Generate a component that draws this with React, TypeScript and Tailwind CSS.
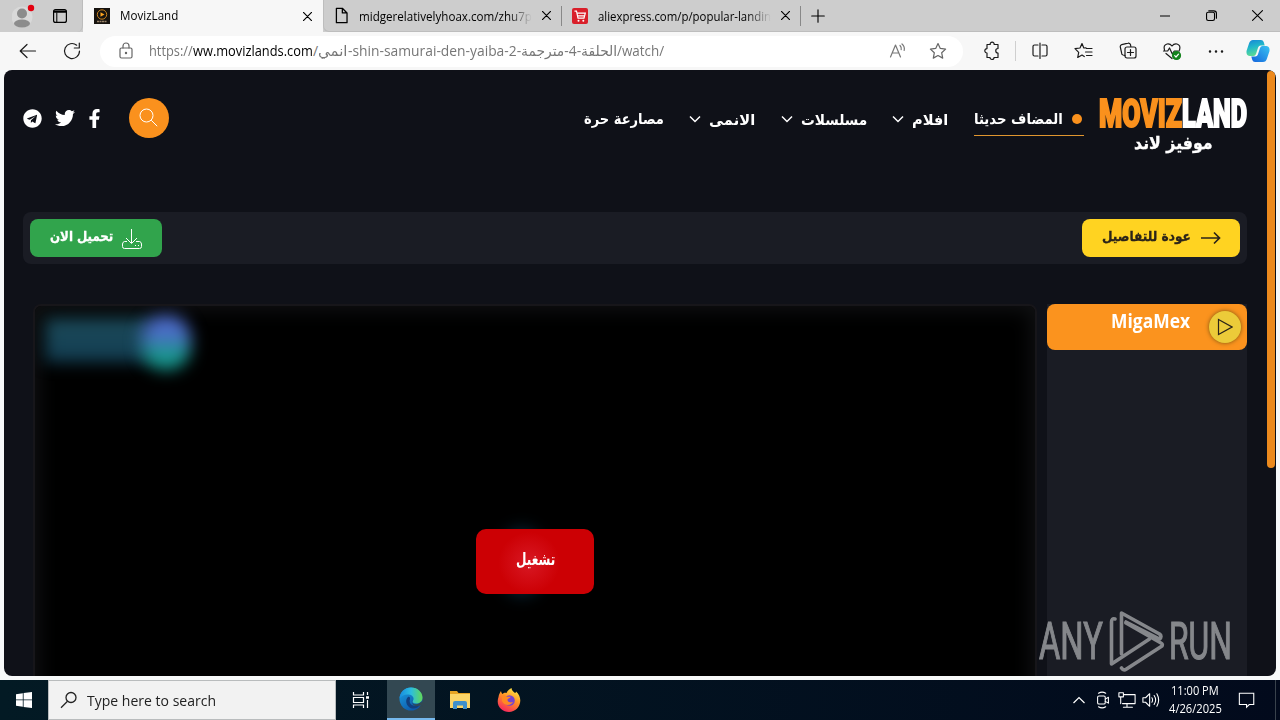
import { useLayoutEffect, useRef, useState } from "react";
import type { ReactNode } from "react";
import { clsx } from "clsx";
import { FaFacebookF, FaTelegram, FaTwitter } from "react-icons/fa";

const SEGOE = "font-['Open_Sans','Noto_Sans',sans-serif]";
const ARABIC = "font-['DejaVu_Sans',sans-serif] font-bold";

// Single line label squeezed or stretched to the width of its box
function Fit({
  className,
  rtl,
  children,
}: {
  className: string;
  rtl?: boolean;
  children: ReactNode;
}) {
  const box = useRef<HTMLSpanElement>(null);
  const text = useRef<HTMLSpanElement>(null);
  const [scale, setScale] = useState(1);

  useLayoutEffect(() => {
    if (box.current && text.current) {
      setScale(box.current.offsetWidth / text.current.offsetWidth);
    }
  }, []);

  return (
    <span ref={box} className={clsx("block shrink-0 whitespace-nowrap", className)}>
      <span
        ref={text}
        dir={rtl ? "rtl" : "ltr"}
        className="inline-block origin-left"
        style={{ transform: `scaleX(${scale})` }}
      >
        {children}
      </span>
    </span>
  );
}

function Icon({ className, children }: { className?: string; children: ReactNode }) {
  return (
    <svg
      viewBox="0 0 20 20"
      fill="none"
      stroke="currentColor"
      strokeWidth="1.2"
      strokeLinecap="round"
      strokeLinejoin="round"
      className={clsx("shrink-0", className ?? "size-5")}
    >
      {children}
    </svg>
  );
}

function CloseIcon() {
  return (
    <Icon className="size-[9px]">
      <path d="M1 1l18 18M19 1L1 19" strokeWidth="2.6" />
    </Icon>
  );
}

function TabBar() {
  return (
    <div className="flex h-8 bg-[#cdcdcd] text-[12px] leading-8 text-black">
      <div className="flex w-[83px] shrink-0 items-center rounded-br-md border-r border-[#bdbdbd] pl-3">
        <svg viewBox="0 0 24 28" className="h-7 w-6">
          <circle cx="10" cy="15" r="10.5" fill="#d9d9d9" />
          <circle cx="10" cy="11.5" r="5" fill="#8c8c8c" />
          <ellipse cx="10" cy="21.5" rx="8" ry="4" fill="#8c8c8c" />
          <circle cx="19" cy="6" r="3.2" fill="#e3000f" />
        </svg>
        <Icon className="ml-4 size-4">
          <rect x="2" y="2" width="16" height="16" rx="2.5" strokeWidth="1.5" />
          <path d="M3 4.500h14" strokeWidth="3" />
          <path d="M6 6v11.500" strokeWidth="1.3" />
        </Icon>
      </div>

      <div className="flex w-[240px] shrink-0 items-center bg-[#f7f7f7] pl-[11px]">
        <svg viewBox="0 0 16 16" className="size-4">
          <rect width="16" height="16" fill="#17130f" />
          <circle cx="8" cy="6.500" r="4.700" fill="none" stroke="#c98320" />
          <path d="M6.500 4.200v4.600l4-2.300z" fill="#ffa51f" />
          <path d="M3 13.500h10" stroke="#99836a" strokeWidth="1.400" strokeDasharray="2 .5" />
        </svg>
        <Fit className="ml-[10px] w-[58px]">MovizLand</Fit>
        <div className="ml-auto mr-[11px]">
          <CloseIcon />
        </div>
      </div>

      <div className="flex w-[239px] shrink-0 items-center rounded-bl-md border-b border-l border-[#bdbdbd] pl-[9px]">
        <Icon className="size-[17px]">
          <path d="M4 1.500h7l5.500 5.500v11.500H4zM11 1.500V7h5.500" strokeWidth="1.500" />
        </Icon>
        <div className="relative ml-[9px] h-[30px] w-[173px] leading-[31px]">
          <Fit className="w-[173px]">midgerelativelyhoax.com/zhu7p</Fit>
          <div className="absolute inset-y-0 right-0 w-6 bg-gradient-to-r from-[#cdcdcd]/0 to-[#cdcdcd]" />
        </div>
        <div className="ml-auto mr-[11px]">
          <CloseIcon />
        </div>
      </div>

      <div className="flex w-[239px] shrink-0 items-center border-b border-[#bdbdbd]">
        <div className="-ml-px h-5 w-px shrink-0 bg-[#888]" />
        <svg viewBox="0 0 16 16" className="ml-[10px] size-4">
          <rect width="16" height="16" rx="2" fill="#d91f2a" />
          <path
            d="M2.500 3.200h2l1.500 7h6l1.300-5H5M5.500 7.800h6.500"
            fill="none"
            stroke="#fff"
            strokeWidth="1.200"
          />
          <circle cx="6.500" cy="12.700" r="1" fill="#fff" />
          <circle cx="11.300" cy="12.700" r="1" fill="#fff" />
        </svg>
        <div className="relative ml-[10px] h-[30px] w-[173px] leading-[31px]">
          <Fit className="w-[173px]">aliexpress.com/p/popular-landin</Fit>
          <div className="absolute inset-y-0 right-0 w-6 bg-gradient-to-r from-[#cdcdcd]/0 to-[#cdcdcd]" />
        </div>
        <div className="ml-auto mr-[11px]">
          <CloseIcon />
        </div>
      </div>

      <div className="flex grow items-center border-b border-[#bdbdbd] pr-[17px]">
        <div className="-ml-px h-5 w-px bg-[#888]" />
        <Icon className="ml-[10px] size-[14px]">
          <path d="M10 1v18M1 10h18" strokeWidth="1.600" />
        </Icon>
        <Icon className="ml-auto size-[10px]">
          <path d="M0 10h20" strokeWidth="2" />
        </Icon>
        <Icon className="ml-[36px] size-[11px]">
          <rect x="1" y="4" width="14.500" height="15" rx="3" strokeWidth="2" />
          <path d="M5 1.500h9q5 0 5 5V15" strokeWidth="2" />
        </Icon>
        <Icon className="ml-[35px] size-[11px]">
          <path d="M1 1l18 18M19 1L1 19" strokeWidth="2" />
        </Icon>
      </div>
    </div>
  );
}

function AddressBar() {
  return (
    <div className="flex h-[38px] items-center bg-[#f7f7f7] pl-[18px] pr-[10px] text-[#1b1b1b]">
      <Icon>
        <path d="M17.500 10H2.500M9 3.500L2.200 10 9 16.500" />
      </Icon>
      <Icon className="ml-6 size-5">
        <path d="M17.500 10a7.500 7.500 0 1 1-2.800-5.800M17.300 2v5h-5" />
      </Icon>

      <div className="ml-[18px] flex h-[31px] w-[863px] items-center rounded-full bg-white pl-4 pr-[15px] text-[14px] leading-[30px] text-[#767676]">
        <Icon className="size-5 text-[#666]">
          <rect x="4" y="7" width="12" height="10" rx="1.500" />
          <path d="M7 7V5a3 3 0 0 1 6 0v2" />
          <circle cx="10" cy="12" r=".6" fill="currentColor" />
        </Icon>
        <Fit className="ml-[13px] w-[44px]">https://</Fit>
        <Fit className="w-[120px] text-black">ww.movizlands.com</Fit>
        <Fit className="w-[5px]">/</Fit>
        <Fit rtl className="w-[30px] font-['Open_Sans','DejaVu_Sans']">
          انمي
        </Fit>
        <Fit className="w-[173px]">-shin-samurai-den-yaiba-2-</Fit>
        <Fit rtl className="w-[96px] font-['Open_Sans','DejaVu_Sans']">
          الحلقة-4-مترجمة
        </Fit>
        <Fit className="w-[47px]">/watch/</Fit>
        <Icon className="ml-auto size-5 text-[#777]">
          <path d="M2.500 16L7.500 4l5 12M4.300 12h6.400M12 4.500q1.800 1.800 1.200 4.200M14 3q3 2.500 2.200 6.500" />
        </Icon>
        <Icon className="ml-5 size-5 text-[#666]">
          <path d="M10 2.500l2.300 4.900 5.300.7-3.900 3.700 1 5.300-4.700-2.600-4.700 2.600 1-5.300-3.900-3.700 5.300-.7z" />
        </Icon>
      </div>

      <Icon className="ml-[19px] size-5">
        <path d="M5 3.500h3.200a2 2 0 1 1 3.900 0H16v4a2 2 0 0 0 0 4.500v4.500h-4a2 2 0 0 1-4 0H5V12a2.200 2.200 0 1 1 0-4.400z" />
      </Icon>
      <div className="ml-[13px] h-5 w-px bg-[#cfcfcf]" />
      <Icon className="ml-[14px] size-5">
        <path d="M8 4H4.500A1.500 1.500 0 0 0 3 5.500v8A1.500 1.500 0 0 0 4.500 15H8M12 4h3.500A1.500 1.500 0 0 1 17 5.500v8a1.500 1.500 0 0 1-1.500 1.500H12M10 2v15.500" />
      </Icon>
      <Icon className="ml-6 size-5">
        <path d="M12 6.800L9.800 7 8 2.500 6 7l-5 .6 3.700 3.700-1 5.200L8 14l2.300 1.500M12.500 7.500H18M11.500 11H18M12.500 14.500H18" />
      </Icon>
      <Icon className="ml-6 size-5">
        <path d="M7 14.500l-2-.5a2 2 0 0 1-1.400-2.200L2.300 6a2 2 0 0 1 1.500-2.400L10 2.200a2 2 0 0 1 2.500 1.500l.3 1.800" />
        <rect x="7" y="6" width="11" height="11" rx="2" />
        <path d="M12.500 8.500v6M9.500 11.500h6" />
      </Icon>
      <Icon className="ml-6 size-5">
        <path d="M2.500 9Q1 4 5 3q3-.6 5 2 2-2.600 5-2 4 1 2.500 6M1.500 10h4.200l1.800-3 2.800 6 2-3h5M4 12.500l6 5" />
        <circle cx="14.500" cy="14.500" r="4" fill="#14831d" stroke="#14831d" />
        <path d="M12.700 14.700l1.300 1.300 2.500-2.800" stroke="#fff" />
      </Icon>
      <Icon className="ml-6 size-5">
        <path d="M4 10.500h.01M10 10.500h.01M16 10.500h.01" strokeWidth="2.500" />
      </Icon>
      <svg viewBox="0 0 24 24" className="ml-auto size-6">
        <defs>
          <linearGradient id="cpA" x1="0" y1="0" x2="0.3" y2="1">
            <stop offset="0" stopColor="#1683d8" />
            <stop offset="0.500" stopColor="#21b8c9" />
            <stop offset="1" stopColor="#5ddb93" />
          </linearGradient>
          <linearGradient id="cpB" x1="1" y1="0" x2="0" y2="1">
            <stop offset="0" stopColor="#38c4f2" />
            <stop offset="1" stopColor="#1463dc" />
          </linearGradient>
        </defs>
        <path
          d="M7 1h8q2 0 2.700 2l1 3.500h-4q-2 0-2.600 2L10 15q-.7 2-2.500 2H3.500Q0 16.500.5 12L3 4.500Q4 1 7 1z"
          fill="url(#cpA)"
        />
        <path
          d="M17 23H9q-2 0-2.700-2l-1-3.500h4q2 0 2.600-2L14 9q.7-2 2.500-2h4q3.500.5 3 5L21 19.500Q20 23 17 23z"
          fill="url(#cpB)"
        />
      </svg>
    </div>
  );
}

function Chevron({ className }: { className: string }) {
  return (
    <svg viewBox="0 0 12 8" className={clsx("-mt-px h-2 w-3 shrink-0", className)}>
      <path d="M1 1.500l5 5 5-5" fill="none" stroke="#fff" strokeWidth="1.500" />
    </svg>
  );
}

function SiteHeader() {
  return (
    <header className="flex h-[142px] items-start pl-[19px] pr-[29px] text-white">
      <div className="mt-[28px] flex h-10 items-center">
        <FaTelegram className="size-[19px]" />
        <FaTwitter className="ml-[13px] size-5" />
        <FaFacebookF className="ml-[10px] size-[19px]" />
        <div className="ml-[25px] flex size-10 items-center justify-center rounded-full bg-[#fa911d]">
          <svg viewBox="0 0 20 20" className="size-5" fill="none" stroke="#fff">
            <circle cx="7.500" cy="7.500" r="6.500" />
            <path d="M12.200 12.200l6 6" />
          </svg>
        </div>
      </div>

      <nav className={clsx("ml-auto mt-[33px] flex h-[33px] items-center text-[15px] leading-[32px]", ARABIC)}>
        <Fit rtl className="-mt-px w-[80px]">
          مصارعة حرة
        </Fit>
        <Chevron className="ml-[25px]" />
        <Fit rtl className="ml-2 w-[46px]">
          الانمى
        </Fit>
        <Chevron className="ml-[26px]" />
        <Fit rtl className="ml-2 w-[66px]">
          مسلسلات
        </Fit>
        <Chevron className="ml-[25px]" />
        <Fit rtl className="ml-2 w-[36px]">
          افلام
        </Fit>
        <div className="ml-[26px] w-[110px]">
          <div className="flex h-8 items-center">
            <Fit rtl className="w-[89px]">
              المضاف حديثا
            </Fit>
            <span className="ml-[9px] size-[10px] rounded-full bg-[#fa911d]" />
          </div>
          <div className="h-px bg-[#e0962f]" />
        </div>
      </nav>

      <div className="ml-[15px] mt-[26px] w-[148px]">
        <div className="flex h-9 font-['Roboto',sans-serif] text-[38px] font-black leading-9 [-webkit-text-stroke:2px_currentColor]">
          <Fit className="w-[83px] text-[#fa911d]">MOVIZ</Fit>
          <Fit className="w-[65px]">LAND</Fit>
        </div>
        <Fit rtl className={clsx("ml-[35px] h-6 w-[79px] text-[17px] leading-[22px] [-webkit-text-stroke:0.4px_currentColor]", ARABIC)}>
          موفيز لاند
        </Fit>
      </div>
    </header>
  );
}

function ActionBar() {
  return (
    <div className={clsx("ml-[19px] flex h-[52px] w-[1224px] items-center justify-between rounded-lg bg-[#1a1c24] px-[7px] text-[13.500px]", ARABIC)}>
      <button className="flex h-[38px] w-[132px] items-center rounded-lg bg-[#31a44c] pl-5 text-white [-webkit-text-stroke:0.3px_currentColor]">
        <Fit rtl className="-mt-[3px] w-[63px]">
          تحميل الان
        </Fit>
        <svg viewBox="0 0 20 20" className="ml-[9px] mt-px size-5" fill="none" stroke="#fff">
          <path d="M9.500 0v14M4 9l5.500 5.500L15 9" />
          <path d="M5 12.500H2.500Q.5 13 .5 15v2.500q0 2 2 2h15q2 0 2-2V15q0-2-2-2.500H14M13 16.500h1M16 16.500h1" />
        </svg>
      </button>
      <button className="flex h-[38px] w-[158px] items-center rounded-lg bg-[#ffd321] pl-5 text-[#2b2419] [-webkit-text-stroke:0.3px_currentColor]">
        <Fit rtl className="-mt-[3px] w-[89px]">
          عودة للتفاصيل
        </Fit>
        <svg viewBox="0 0 20 14" className="ml-[10px] h-[14px] w-5" fill="none" stroke="#2b2419" strokeWidth="1.700">
          <path d="M0 7h18.500M13 1.500L18.500 7 13 12.500" />
        </svg>
      </button>
    </div>
  );
}

function Player() {
  return (
    <div className="relative flex h-[420px] w-[1004px] shrink-0 justify-center overflow-hidden rounded-lg border-2 border-[#17161a] bg-black shadow-[inset_0_0_20px_4px_#111214]">
      {/* blurred poster behind the play button */}
      <div className="absolute left-[10px] top-[12px] h-[44px] w-[108px] bg-gradient-to-b from-[#1c4a59] to-[#123d52] blur-[8px]" />
      <div className="absolute left-[106px] top-[9px] h-[55px] w-[50px] rounded-3xl bg-gradient-to-b from-[#4a6bc6] from-35% to-[#17958d] to-70% blur-[8px]" />
      <div className="absolute left-[468px] top-[222px] h-[68px] w-[38px] rounded-full bg-[#082535] blur-[8px]" />
      <button className="relative mt-[223px] flex h-[65px] w-[118px] items-center justify-center rounded-[10px] bg-[radial-gradient(circle_at_45%_52%,#d81824_0,#cc0004_42%)] font-['DejaVu_Sans',sans-serif] text-[17px] font-bold text-white">
        <Fit rtl className="-mt-1 w-[39px]">
          تشغيل
        </Fit>
      </button>
    </div>
  );
}

function ServerList() {
  return (
    <aside className="ml-[10px] w-[200px] shrink-0 bg-[#1a1c24]">
      <div className="flex h-[46px] items-start rounded-lg bg-[#fb931e] pl-[64px] text-white">
        <Fit className="mt-[4px] w-[79px] font-['Open_Sans',sans-serif] text-[19px] font-bold leading-[26px]">
          MigaMex
        </Fit>
        <div className="ml-[19px] mt-[7px] flex size-8 items-center justify-center rounded-full bg-[#eccb39] shadow-[0_0_4px_#7a5510]">
          <svg viewBox="0 0 16 18" className="h-[18px] w-4" fill="none" stroke="#2b2419">
            <path d="M1.500 1.500v15l13.500-7.500z" strokeWidth="1.200" />
          </svg>
        </div>
      </div>
    </aside>
  );
}

function Watermark() {
  return (
    <div className="absolute left-[1035px] top-[540px] flex h-[63px] w-[193px] items-center font-['Roboto',sans-serif] text-[51px] leading-[63px] text-[#85878b]">
      <Fit className="w-[64px] [-webkit-text-stroke:1.200px_currentColor]">ANY</Fit>
      <svg viewBox="0 0 56 63" className="ml-[6px] h-[63px] w-14 shrink-0" fill="none" stroke="#85878b" strokeWidth="3.600" strokeLinejoin="round" strokeLinecap="round">
        <path d="M6 9Q2.500 8 2.500 12v42l38-25" />
        <path d="M12.500 44V3l38 21q3 2.500 0 5L17 12" />
        <path d="M12.500 58q2 3 5 1L53 36q1-2-1-3L17 13" />
      </svg>
      <Fit className="ml-[4px] w-[63px] [-webkit-text-stroke:1.200px_currentColor]">RUN</Fit>
    </div>
  );
}

function Taskbar() {
  return (
    <div className="flex h-10 items-center bg-gradient-to-r from-[#031a24] to-[#020a1c] text-white">
      <div className="flex h-10 w-12 shrink-0 items-center justify-center">
        <svg viewBox="0 0 16 16" className="size-4" fill="#fff">
          <path d="M0 2.200L6.800 1.200v6.300H0zM7.600 1.100L16 0v7.500H7.600zM0 8.300h6.800v6.400L0 13.700zM7.600 8.300H16V16l-8.400-1.100z" />
        </svg>
      </div>
      <div className="flex h-10 w-[288px] shrink-0 items-center border border-[#b9bcbd] bg-[#f2f2f2] pl-[11px] text-[#222]">
        <svg viewBox="0 0 18 18" className="size-[18px]" fill="none" stroke="#222" strokeWidth="1.300">
          <circle cx="11" cy="6.500" r="5" />
          <path d="M7.500 10.200L1 16.700" />
        </svg>
        <Fit className="ml-[9px] w-[129px] text-[15px] leading-10">Type here to search</Fit>
      </div>

      <div className="flex h-10 w-[51px] shrink-0 items-center pl-4">
        <svg viewBox="0 0 18 18" className="size-[18px]" fill="none" stroke="#fff" strokeWidth="1.200">
          <path d="M1.500 1v3h10V1M1.500 17v-3h10v3M1.500 6.500h10v5h-10zM15.500 1v3M15.500 9v8" />
          <path d="M14 6.500h3" strokeWidth="2.500" />
        </svg>
      </div>

      <div className="flex h-10 w-12 shrink-0 items-center justify-center border-b-2 border-[#76b9ed] bg-[#334852]">
        <svg viewBox="0 0 24 24" className="size-6">
          <defs>
            <linearGradient id="edgeTop" x1="0" y1="0.500" x2="1" y2="0.500">
              <stop offset="0" stopColor="#178be0" />
              <stop offset="0.500" stopColor="#2cbddf" />
              <stop offset="1" stopColor="#62d957" />
            </linearGradient>
            <linearGradient id="edgeSide" x1="0" y1="0" x2="0.800" y2="1">
              <stop offset="0" stopColor="#1ba1e3" />
              <stop offset="1" stopColor="#0c50a4" />
            </linearGradient>
          </defs>
          <circle cx="12" cy="12" r="11.500" fill="url(#edgeSide)" />
          <path d="M.5 11.500C1 5 6 .5 12 .5c7 0 11.500 5 11.500 10 0 4-3 6-6.500 6-3 0-4-1.500-3-3 1.500-2 0-5.500-4.500-6-4-.3-7.500 1.500-9 4z" fill="url(#edgeTop)" />
          <path d="M9 10c-2.500 2-2.500 7 1 10 3 2.500 8 2 11-2-5 2.500-12 0-10-6 .5-1.500-1-2.500-2-2z" fill="#123f7e" />
          <path d="M13.500 13c-2 2.500 1 4.800 4 4.300 3-.5 4-1.800 5-3l1.500 5q-2 .2-2.500-1c-4 2-10 0-8-5.300z" fill="#334852" />
        </svg>
      </div>
      <div className="flex h-10 w-[49px] shrink-0 items-center justify-center">
        <svg viewBox="0 0 22 20" className="h-5 w-[22px]">
          <path d="M1 1h7l1.500 2H21v4H1z" fill="#e6a323" />
          <rect x="1" y="4" width="20" height="14" fill="#fbd467" />
          <path d="M4 19v-6q0-2 2-2h10q2 0 2 2v6h-4v-3.500H8V19z" fill="#3f8fcb" />
        </svg>
      </div>
      <div className="ml-px flex h-10 w-12 shrink-0 items-center justify-center">
        <svg viewBox="0 0 24 24" className="size-6">
          <defs>
            <linearGradient id="fox" x1="0.800" y1="0" x2="0.300" y2="1">
              <stop offset="0" stopColor="#fff04a" />
              <stop offset="0.450" stopColor="#ff9425" />
              <stop offset="1" stopColor="#f7245e" />
            </linearGradient>
          </defs>
          <path d="M1.500 9c.3-2.500 1.500-4.500 2.500-6 .2 1.500.8 2.300 1.500 3C7 4.500 8 4.500 9.500 5c1-2 2.500-4 5-5 .2 2.500 2 3.500 3.500 5 .8-.2 1-.7 1-1.500 3 2.500 4.300 6 4.300 9C23.300 19 18 24 12 24S.7 19.500.7 13.500C.7 12 1 10.500 1.500 9z" fill="url(#fox)" />
          <circle cx="12.500" cy="12.500" r="5.300" fill="#7644cf" />
          <path d="M5 8c2-.8 3.500-.5 5 .8h3.500c0 1.500-2.500 1.500-3 2.700-.3 2.500 2.500 3.500 5.500 2.500-2 4-9 4-11-1z" fill="#ff8a22" />
        </svg>
      </div>

      <div className="ml-auto flex h-10 items-center">
        <svg viewBox="0 0 12 8" className="h-2 w-3" fill="none" stroke="#fff" strokeWidth="1.200">
          <path d="M.5 7L6 1.500 11.500 7" />
        </svg>
        <Icon className="ml-[9px] size-[18px]">
          <rect x="4" y="5.500" width="8.500" height="9" rx="1.500" />
          <path d="M12.500 9l3.500-2v6.500l-3.500-2M5 2.500q4-2.500 8 0M5 17.500q4 2.500 8 0" />
        </Icon>
        <Icon className="ml-[6px] size-[18px]">
          <path d="M6.500 4H19v10H5M10 14v4M6 18h10M1 2h5v4.500H1zM3 6.500V14" />
        </Icon>
        <Icon className="ml-[6px] size-[18px]">
          <path d="M1 7.500h3L8.500 3v14L4 12.500H1zM11 7.500q1.500 2.500 0 5M13.500 5q3.300 5 0 10M16.500 3q4 7 0 14" />
        </Icon>
        <div className="ml-2 flex w-[54px] flex-col items-center text-[12px] leading-[18px]">
          <Fit className="w-[48px]">11:00 PM</Fit>
          <Fit className="w-[53px]">4/26/2025</Fit>
        </div>
        <Icon className="ml-[16px] size-[18px]">
          <path d="M1.500 2.500h16v12.500h-5l-3 3v-3h-8z" strokeLinejoin="miter" />
        </Icon>
        <div className="ml-[19px] mr-[4px] h-10 w-px bg-[#39424c]" />
      </div>
    </div>
  );
}

export default function App() {
  return (
    <div className={clsx("h-[720px] w-[1280px] overflow-hidden bg-[#f7f9f9]", SEGOE)}>
      <TabBar />
      <AddressBar />
      <main className="relative mx-1 mb-1 h-[606px] overflow-hidden rounded-lg bg-[#0f1118]">
        <SiteHeader />
        <ActionBar />
        <div className="ml-[29px] mt-10 flex">
          <Player />
          <ServerList />
        </div>
        <div className="absolute right-px top-px h-[397px] w-2 rounded-full bg-[#ec8a1d]" />
        <Watermark />
      </main>
      <Taskbar />
    </div>
  );
}
